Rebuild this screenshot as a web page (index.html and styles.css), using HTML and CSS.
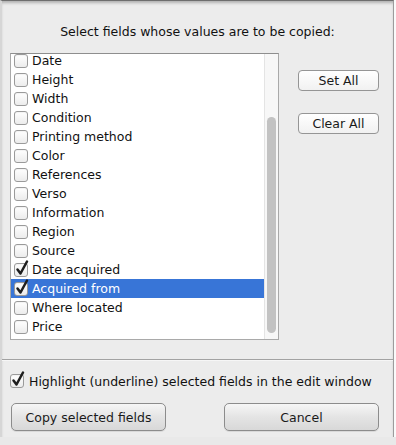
FILE: index.html
```html
<!DOCTYPE html>
<html>
<head>
<meta charset="utf-8">
<link rel="stylesheet" href="styles.css">
</head>
<body>
<div class="screen">
  <div class="dialog">
    <div class="title">Select fields whose values are to be copied:</div>
    <div class="main">
      <div class="listbox">
        <div class="viewport">
          <ul class="list">
            <li class="row"><span class="cb"></span>Date</li>
            <li class="row"><span class="cb"></span>Height</li>
            <li class="row"><span class="cb"></span>Width</li>
            <li class="row"><span class="cb"></span>Condition</li>
            <li class="row"><span class="cb"></span>Printing method</li>
            <li class="row"><span class="cb"></span>Color</li>
            <li class="row"><span class="cb"></span>References</li>
            <li class="row"><span class="cb"></span>Verso</li>
            <li class="row"><span class="cb"></span>Information</li>
            <li class="row"><span class="cb"></span>Region</li>
            <li class="row"><span class="cb"></span>Source</li>
            <li class="row"><span class="cb checked"><svg class="tick" viewBox="0 0 14 16"><path d="M2.5 9.5 L5.5 13.5 L12 1.5" /></svg></span>Date acquired</li>
            <li class="row selected"><span class="cb checked"><svg class="tick" viewBox="0 0 14 16"><path d="M2.5 9.5 L5.5 13.5 L12 1.5" /></svg></span>Acquired from</li>
            <li class="row"><span class="cb"></span>Where located</li>
            <li class="row"><span class="cb"></span>Price</li>
          </ul>
        </div>
        <div class="scrollbar"><div class="thumb"></div></div>
      </div>
      <div class="side-buttons">
        <button class="btn small">Set All</button>
        <button class="btn small">Clear All</button>
      </div>
    </div>
    <div class="sep"></div>
    <div class="highlight"><span class="cb checked"><svg class="tick" viewBox="0 0 14 16"><path d="M2.5 9.5 L5.5 13.5 L12 1.5" /></svg></span>Highlight (underline) selected fields in the edit window</div>
    <div class="actions">
      <button class="btn big">Copy selected fields</button>
      <button class="btn big">Cancel</button>
    </div>
  </div>
  <div class="right-edge"></div>
</div>
<div class="under"></div>
</body>
</html>
```
FILE: styles.css
```css
* { box-sizing: border-box; }
html, body { margin: 0; padding: 0; }
body {
  width: 396px;
  height: 445px;
  overflow: hidden;
  background: #f4f4f4;
  font-family: "DejaVu Sans", "Liberation Sans", sans-serif;
  font-size: 12.5px;
  color: #111;
}
.screen {
  display: flex;
  height: 437px;
}
.dialog {
  width: 394px;
  height: 437px;
  background: #ececec;
  border-left: 2px solid #d6d6d6;
  border-right: 1px solid #9c9c9c;
  border-top: 1px solid #6e6e6e;
  box-shadow: inset 0 3px 3px -1px rgba(0,0,0,0.25);
  display: flex;
  flex-direction: column;
}
.right-edge {
  width: 2px;
  background: #fafafa;
}
.title {
  height: 52px;
  padding-top: 23px;
  text-align: center;
  line-height: 15px;
}
.main {
  display: flex;
  padding-left: 8px;
}
.listbox {
  width: 269px;
  height: 287px;
  border: 1px solid #a9a9a9;
  border-top-color: #8e8e8e;
  background: #fff;
  display: flex;
}
.viewport {
  flex: 1;
  overflow: hidden;
}
.list {
  list-style: none;
  margin: -3px 0 0 0;
  padding: 0;
}
.row {
  height: 19px;
  display: flex;
  align-items: center;
  padding-left: 3px;
  line-height: 19px;
  white-space: nowrap;
}
.row.selected {
  background: #3875d7;
  color: #fff;
}
.cb {
  position: relative;
  width: 14px;
  height: 14px;
  flex: none;
  margin-right: 4px;
  border: 1px solid #9a9a9a;
  border-radius: 3px;
  background: linear-gradient(#ffffff, #ececec);
  box-shadow: inset 0 1px 1px rgba(0,0,0,0.05);
}
.tick {
  position: absolute;
  left: 0px;
  top: -4px;
  width: 14px;
  height: 16px;
  overflow: visible;
}
.tick path {
  fill: none;
  stroke: #1e1e1e;
  stroke-width: 2.5;
  stroke-linecap: round;
  stroke-linejoin: round;
}
.scrollbar {
  width: 14px;
  flex: none;
  background: #f7f7f7;
  border-left: 1px solid #e4e4e4;
  padding: 63px 2px 4px 2px;
}
.thumb {
  width: 9px;
  height: 216px;
  border-radius: 5px;
  background: #c2c2c2;
}
.side-buttons {
  display: flex;
  flex-direction: column;
  gap: 22px;
  padding-top: 17px;
  padding-left: 19px;
}
.btn {
  font-family: "DejaVu Sans", "Liberation Sans", sans-serif;
  font-size: 12.5px;
  color: #1a1a1a;
  border: 1px solid #959595;
  border-radius: 4px;
  padding: 0;
  margin: 0;
}
.btn.small {
  width: 81px;
  height: 21px;
  background: linear-gradient(#ffffff, #f1f1f1);
}
.sep {
  margin-top: 19px;
  height: 1px;
  background: #a2a2a2;
  border-bottom: 1px solid #f6f6f6;
  box-sizing: content-box;
}
.highlight {
  display: flex;
  align-items: center;
  margin-top: 12px;
  padding-left: 8px;
  height: 16px;
  white-space: nowrap;
}
.highlight .cb {
  margin-right: 5px;
}
.actions {
  display: flex;
  justify-content: space-between;
  padding: 0 14px 0 9px;
  margin-top: 14px;
}
.btn.big {
  width: 155px;
  height: 28px;
  border-color: #8c8c8c;
  border-radius: 5px;
  background: linear-gradient(#f6f6f6, #e4e4e4 50%, #d8d8d8);
  box-shadow: 0 1px 0 rgba(0,0,0,0.08);
}
.under {
  height: 8px;
  background: #e9e9e9;
}
```
